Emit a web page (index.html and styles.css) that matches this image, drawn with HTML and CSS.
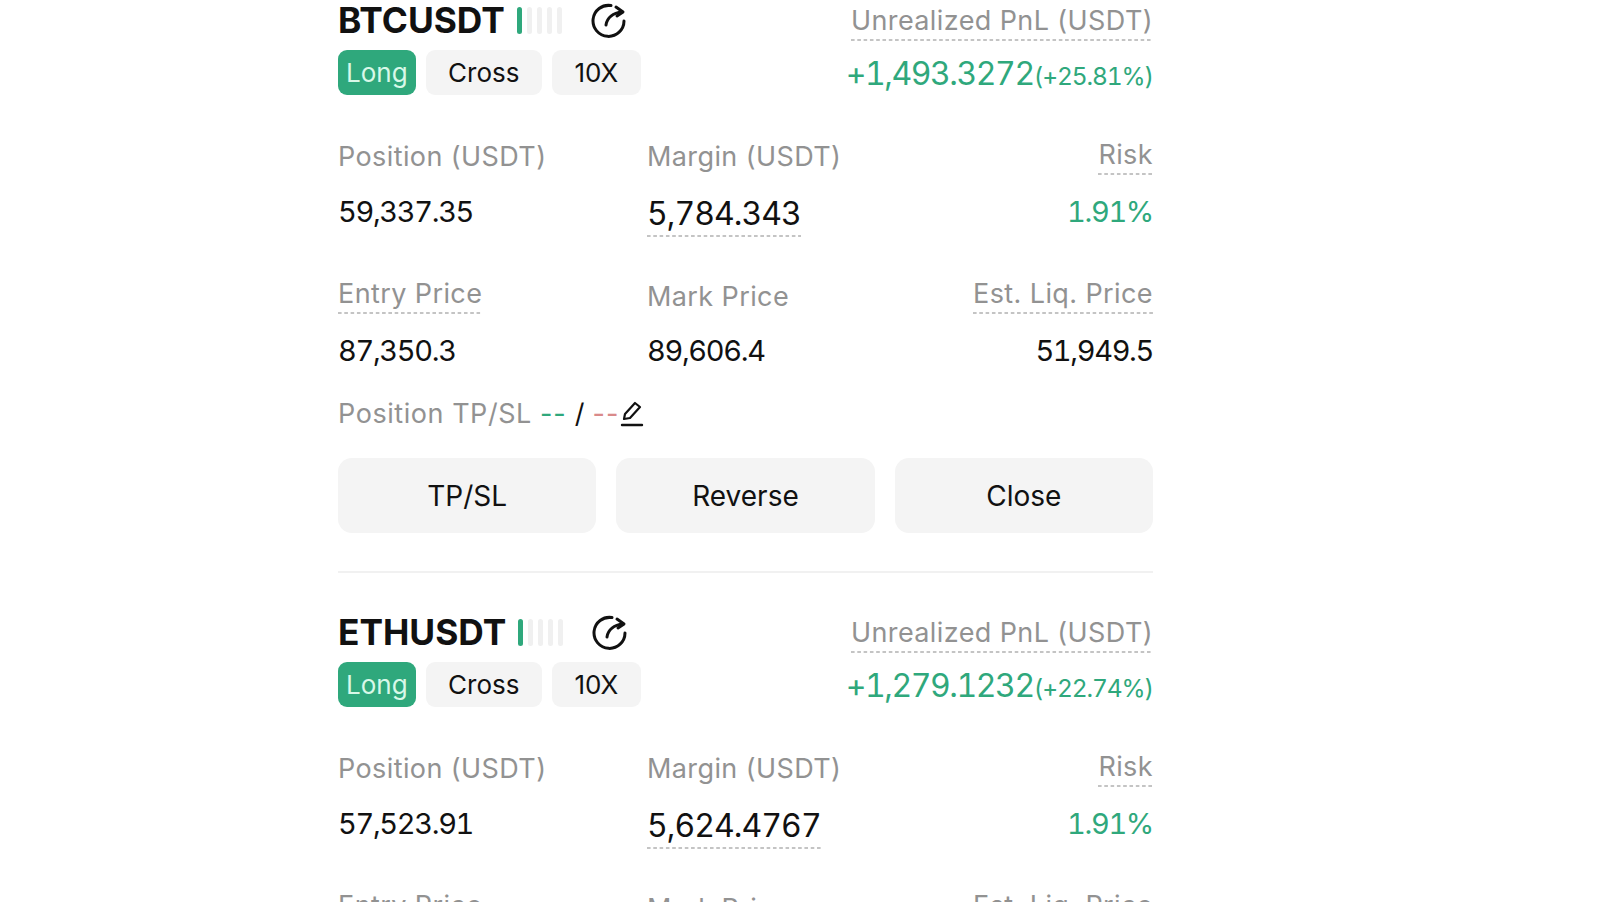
FILE: index.html
```html
<!DOCTYPE html>
<html lang="en">
<head>
    <meta charset="UTF-8">
    <meta name="viewport" content="width=device-width, initial-scale=1.0">
    <title>Positions</title>
    <link rel="stylesheet" href="styles.css">
</head>
<body>
    <div class="container">
        <div class="position">
            <div class="top">
                <div>
                    <div class="symbol">
                        <h2>BTCUSDT</h2>
                        <div class="bars"><i class="on"></i><i></i><i></i><i></i><i></i></div>
                        <svg class="share" width="36" height="36" viewBox="0 0 36 36" fill="none" stroke="#111" stroke-width="3" stroke-linecap="round" stroke-linejoin="round"><path d="M21 3.6A15.5 15.5 0 1 0 34 19"/><path d="M16 23c1-7 7-12 16-13"/><path d="M26 5l7 5-6 4"/></svg>
                    </div>
                    <div class="tags">
                        <span class="tag long">Long</span>
                        <span class="tag">Cross</span>
                        <span class="tag">10X</span>
                    </div>
                </div>
                <div class="pnl">
                    <span class="label dashed">Unrealized PnL (USDT)</span>
                    <div class="pnl-value">+1,493.3272<small>(+25.81%)</small></div>
                </div>
            </div>
            <div class="stats">
                <div class="cell"><span class="label">Position (USDT)</span><span class="value">59,337.35</span></div>
                <div class="cell"><span class="label">Margin (USDT)</span><span class="value big dashed">5,784.343</span></div>
                <div class="cell right"><span class="label dashed">Risk</span><span class="value green">1.91%</span></div>
            </div>
            <div class="stats second">
                <div class="cell"><span class="label dashed">Entry Price</span><span class="value">87,350.3</span></div>
                <div class="cell"><span class="label lower">Mark Price</span><span class="value">89,606.4</span></div>
                <div class="cell right"><span class="label dashed">Est. Liq. Price</span><span class="value">51,949.5</span></div>
            </div>
            <div class="tpsl">
                <span class="label">Position TP/SL</span>
                <span class="dash green">--</span>
                <span>/</span>
                <span class="dash red">--</span>
                <svg class="edit" width="24" height="28" viewBox="0 0 24 28" fill="none" stroke="#111" stroke-width="2.2" stroke-linejoin="round" stroke-linecap="round"><path d="M4 19l1-5L15 3l5 4L10 18z"/><path d="M2 25h20" stroke-width="2.4"/></svg>
            </div>
            <div class="actions">
                <button>TP/SL</button>
                <button>Reverse</button>
                <button>Close</button>
            </div>
        </div>

        <div class="position">
            <div class="top">
                <div>
                    <div class="symbol">
                        <h2>ETHUSDT</h2>
                        <div class="bars"><i class="on"></i><i></i><i></i><i></i><i></i></div>
                        <svg class="share" width="36" height="36" viewBox="0 0 36 36" fill="none" stroke="#111" stroke-width="3" stroke-linecap="round" stroke-linejoin="round"><path d="M21 3.6A15.5 15.5 0 1 0 34 19"/><path d="M16 23c1-7 7-12 16-13"/><path d="M26 5l7 5-6 4"/></svg>
                    </div>
                    <div class="tags">
                        <span class="tag long">Long</span>
                        <span class="tag">Cross</span>
                        <span class="tag">10X</span>
                    </div>
                </div>
                <div class="pnl">
                    <span class="label dashed">Unrealized PnL (USDT)</span>
                    <div class="pnl-value">+1,279.1232<small>(+22.74%)</small></div>
                </div>
            </div>
            <div class="stats">
                <div class="cell"><span class="label">Position (USDT)</span><span class="value">57,523.91</span></div>
                <div class="cell"><span class="label">Margin (USDT)</span><span class="value big dashed">5,624.4767</span></div>
                <div class="cell right"><span class="label dashed">Risk</span><span class="value green">1.91%</span></div>
            </div>
            <div class="stats second">
                <div class="cell"><span class="label dashed">Entry Price</span></div>
                <div class="cell"><span class="label lower">Mark Price</span></div>
                <div class="cell right"><span class="label dashed">Est. Liq. Price</span></div>
            </div>
        </div>
    </div>
</body>
</html>
```

FILE: styles.css
```css
* {
    margin: 0;
    padding: 0;
    box-sizing: border-box;
}

html, body {
    height: 100%;
    overflow: hidden;
}

body {
    font-family: Inter, "Noto Sans", sans-serif;
    background: white;
    color: #111;
    padding-left: 338px;
}

.container {
    width: 815px;
}

.position {
    height: 612px;
    padding-top: 1px;
}

.top {
    display: flex;
    justify-content: space-between;
}

.symbol {
    display: flex;
    align-items: center;
    height: 38px;
}

.symbol h2 {
    padding-top: 1px;
    font-size: 35.3px;
    font-weight: 700;
    line-height: 38px;
}

.bars {
    display: flex;
    gap: 5px;
    margin-left: 12px;
}

.bars i {
    width: 5px;
    height: 27px;
    border-radius: 3px;
    background: #f0f0f0;
}

.bars i.on {
    background: #2fa87c;
}

.share {
    margin-left: 28px;
}

.tags {
    display: flex;
    gap: 10px;
    margin-top: 11px;
}

.tag {
    height: 45px;
    padding: 0 22.5px;
    border-radius: 9px;
    background: #f4f4f4;
    font-size: 26px;
    line-height: 45px;
}

.tag.long {
    padding: 0 8px;
    background: #2fa87c;
    color: #d8f8e8;
}

.pnl {
    display: flex;
    flex-direction: column;
    align-items: flex-end;
}

.pnl .label {
    margin-top: 1px;
}

.label {
    font-size: 27px;
    line-height: 38px;
    color: #929292;
    letter-spacing: 0.4px;
}

.dashed {
    padding-bottom: 1px;
    background: linear-gradient(to right, #c4c4c4 58%, transparent 0) bottom left / 6.3px 2px repeat-x;
}

.pnl-value {
    margin-top: 11px;
    font-size: 32px;
    line-height: 44px;
    letter-spacing: -1.45px;
    color: #2fa87c;
    font-variant-numeric: tabular-nums;
}

.pnl-value small {
    font-size: 24.5px;
    letter-spacing: -1.1px;
}

.stats {
    display: grid;
    grid-template-columns: 309px 1fr auto;
    margin-top: 40px;
}

.stats.second {
    margin-top: 40px;
}

.cell {
    display: flex;
    flex-direction: column;
    align-items: flex-start;
}

.cell.right {
    align-items: flex-end;
}

.cell .label.dashed {
    margin-top: -2px;
    margin-bottom: 1px;
}

.cell .label.lower {
    margin-top: 1px;
    margin-bottom: -1px;
}

.value {
    margin-top: 17px;
    font-size: 29px;
    line-height: 38px;
    letter-spacing: -1.35px;
    font-variant-numeric: tabular-nums;
}

.value.big {
    margin-top: 19px;
    padding-bottom: 4px;
    font-size: 32px;
    letter-spacing: -0.95px;
}

.green {
    color: #2fa87c;
}

.red {
    color: #d98a8a;
}

.tpsl {
    display: flex;
    align-items: center;
    gap: 8px;
    margin-top: 25px;
    font-size: 27px;
    line-height: 38px;
}

.tpsl .label {
    letter-spacing: 0.55px;
}

.dash {
    letter-spacing: 1px;
}

.edit {
    margin-left: -7px;
}

.actions {
    display: grid;
    grid-template-columns: repeat(3, 1fr);
    gap: 20px;
    margin-top: 25px;
    padding-bottom: 38px;
    border-bottom: 2px solid #f1f1f1;
}

button {
    height: 75px;
    border: none;
    border-radius: 14px;
    background: #f4f4f4;
    color: #111;
    font-family: inherit;
    font-size: 28px;
}
```
